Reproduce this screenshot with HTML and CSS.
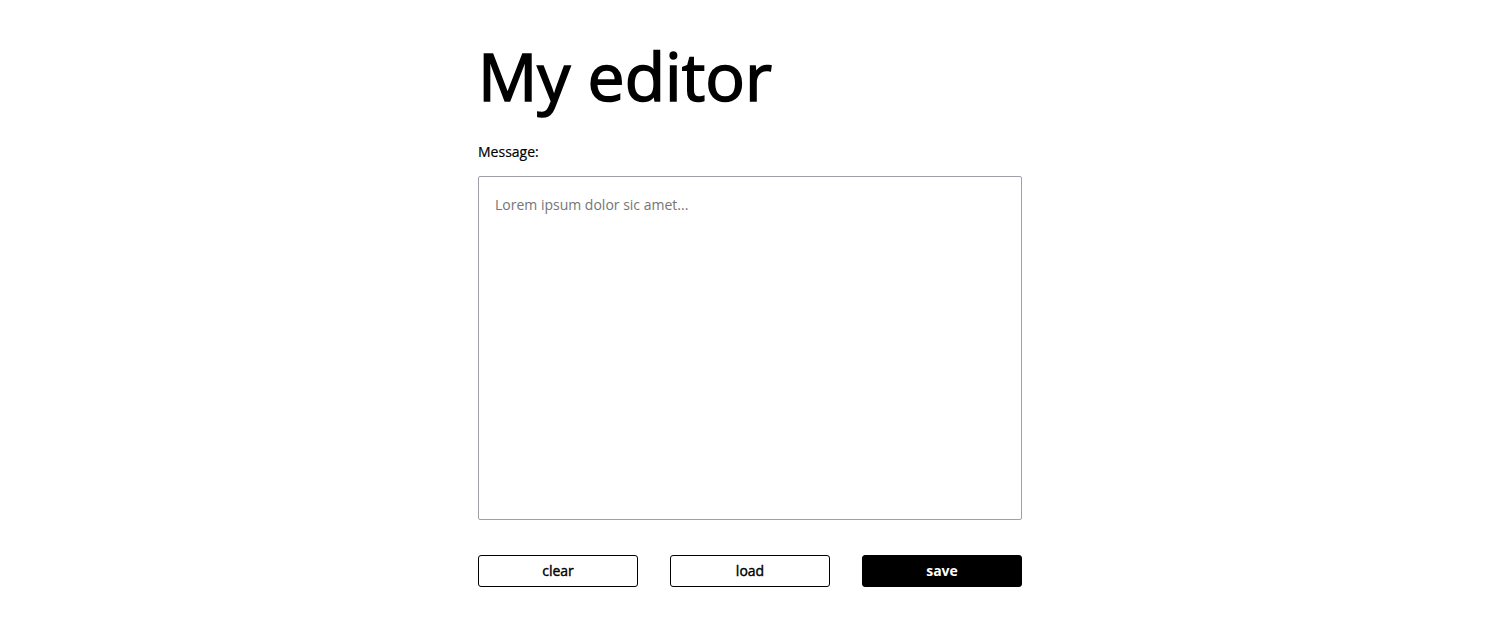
FILE: index.html
```
<!DOCTYPE html>
<html>
<head>
<meta charset="utf-8">
<link rel="stylesheet" href="styles.css">
</head>
<body>
<main class="page">
  <h1 class="title">My editor</h1>
  <label class="label" for="msg">Message:</label>
  <textarea id="msg" class="editor" placeholder="Lorem ipsum dolor sic amet..."></textarea>
  <div class="actions">
    <button class="btn">clear</button>
    <button class="btn">load</button>
    <button class="btn btn-primary">save</button>
  </div>
</main>
</body>
</html>
```
FILE: styles.css
```
html, body {
  margin: 0;
  padding: 0;
  background: #fff;
}
body {
  font-family: "Open Sans", "Noto Sans", sans-serif;
  color: #000;
}
.page {
  width: 544px;
  margin-left: calc(50% - 265.5px);
  display: flex;
  flex-direction: column;
  padding-top: 35px;
}
.title {
  font-size: 66px;
  font-weight: 400;
  -webkit-text-stroke: 1.6px #000;
  line-height: 80px;
  margin: 0 0 27px 0;
}
.label {
  font-size: 14px;
  font-weight: 400;
  -webkit-text-stroke: 0.2px #000;
  line-height: 20px;
  margin-bottom: 14px;
}
.editor {
  box-sizing: border-box;
  width: 544px;
  height: 344px;
  border: 1px solid #a0a0a8;
  border-radius: 2px;
  padding: 16px;
  font-family: "Open Sans", "Noto Sans", sans-serif;
  font-size: 14px;
  line-height: 24px;
  resize: none;
  margin: 0;
}
.editor::placeholder {
  color: #757575;
}
.actions {
  display: flex;
  gap: 32px;
  margin-top: 35px;
}
.btn {
  box-sizing: border-box;
  width: 160px;
  height: 32px;
  border: 1px solid #000;
  border-radius: 3px;
  background: #fff;
  color: #000;
  font-family: "Open Sans", "Noto Sans", sans-serif;
  font-size: 14px;
  font-weight: 400;
  -webkit-text-stroke: 0.4px #000;
  padding: 0 0 1px 0;
}
.btn-primary {
  background: #000;
  color: #fff;
  font-weight: 700;
  -webkit-text-stroke: 0;
}
```
